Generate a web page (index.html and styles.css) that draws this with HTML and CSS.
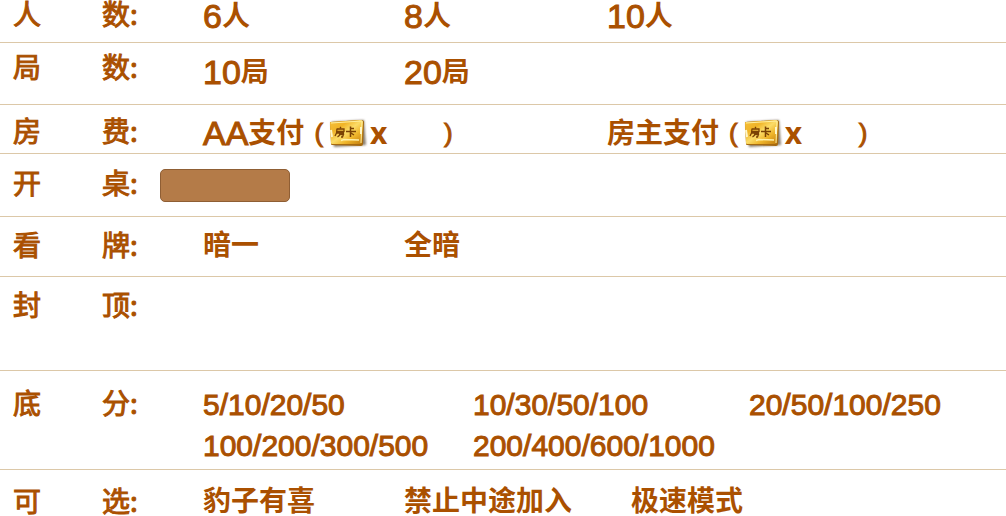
FILE: index.html
```html
<!DOCTYPE html>
<html lang="zh-CN">
<head>
<meta charset="utf-8">
<link rel="stylesheet" href="styles.css">
</head>
<body>
<svg class="defs" aria-hidden="true">
  <defs>
    <linearGradient id="gold" x1="0" y1="0" x2="1" y2="1">
      <stop offset="0" stop-color="#f6c03a"/>
      <stop offset=".3" stop-color="#f0b428"/>
      <stop offset=".5" stop-color="#fbdc68"/>
      <stop offset=".7" stop-color="#efb52a"/>
      <stop offset="1" stop-color="#c07a0c"/>
    </linearGradient>
    <filter id="soft" x="-20%" y="-20%" width="140%" height="140%"><feGaussianBlur stdDeviation="1.2"/></filter>
    <symbol id="card" viewBox="0 0 40 32">
      <path d="M3 5 36 3 38 28 6 30Z" fill="#3c2a10" opacity=".6" filter="url(#soft)"/>
      <path d="M2 6Q2 5 3 5L33 3Q36 3 36 5L35 27Q35 29 33 29L4 28Q3 28 3 27Z" fill="#a66a10"/>
      <path d="M2 6Q2 5 3 5L32 3Q35 3 35 5L34 25Q34 27 32 27L4 27Q3 27 3 26Z" fill="url(#gold)"/>
      <path d="M3 6 34 4 33 26" fill="none" stroke="#fff0a0" stroke-width="1"/>
      <path d="M3 13 4 20M33 10 33 17" stroke="#fff7c8" stroke-width="2"/>
      <path d="M12 10 13 11M9 12H16V14.500H9M9 11.500 8.500 16 7 19M8.500 16H16M12 14.500V16Q12 18.500 9.500 20M12 17.500H15.500L14.500 20H13" fill="none" stroke="#7a4204" stroke-width="1.300"/>
      <path d="M22.500 9.500V14M22.500 11.500H26M18 14.500H28M22.500 14.500V20M23 16 26 18" fill="none" stroke="#7a4204" stroke-width="1.500"/>
      <path d="M13 23.500 16 22.500 31 23" fill="none" stroke="#fff0a8" stroke-width="1.500"/>
    </symbol>
  </defs>
</svg>
<main class="settings">
  <section class="row row-players">
    <h2 class="label"><span>人</span><span>数:</span></h2>
    <ul class="options large"><li>6<b>人</b></li><li>8<b>人</b></li><li>10<b>人</b></li></ul>
  </section>
  <section class="row row-rounds">
    <h2 class="label"><span>局</span><span>数:</span></h2>
    <ul class="options large"><li>10<b>局</b></li><li>20<b>局</b></li></ul>
  </section>
  <section class="row row-fee">
    <h2 class="label"><span>房</span><span>费:</span></h2>
    <ul class="options large pair">
      <li>AA<b>支付</b><span class="cost"><span>(</span><svg class="card"><use href="#card"/></svg><strong>x</strong><span>)</span></span></li>
      <li><b>房主支付</b><span class="cost"><span>(</span><svg class="card"><use href="#card"/></svg><strong>x</strong><span>)</span></span></li>
    </ul>
  </section>
  <section class="row row-table">
    <label class="label" for="table"><span>开</span><span>桌:</span></label>
    <input class="field" id="table" type="text">
  </section>
  <section class="row row-look">
    <h2 class="label"><span>看</span><span>牌:</span></h2>
    <ul class="options"><li><b>暗一</b></li><li><b>全暗</b></li></ul>
  </section>
  <section class="row row-cap">
    <h2 class="label"><span>封</span><span>顶:</span></h2>
  </section>
  <section class="row row-base">
    <h2 class="label"><span>底</span><span>分:</span></h2>
    <ul class="options scores"><li>5/10/20/50</li><li>10/30/50/100</li><li>20/50/100/250</li><li>100/200/300/500</li><li>200/400/600/1000</li></ul>
  </section>
  <section class="row row-extra">
    <h2 class="label"><span>可</span><span>选:</span></h2>
    <ul class="options extras"><li><b>豹子有喜</b></li><li><b>禁止中途加入</b></li><li><b>极速模式</b></li></ul>
  </section>
</main>
</body>
</html>
```
FILE: styles.css
```css
* { box-sizing: border-box; }
body {
  margin: 0;
  background: #fff;
  color: #aa5000;
  font-family: "Liberation Sans", "Noto Sans CJK SC", sans-serif;
  overflow: hidden;
}
.defs { position: absolute; width: 0; height: 0; }
.row {
  display: grid;
  grid-template-columns: 147px 43px 1fr;
  align-items: start;
  padding-left: 13px;
  border-bottom: 1px solid #dcc8a8;
}
.label {
  display: flex;
  gap: 61px;
  margin: 0;
  font-family: "Noto Sans CJK SC", sans-serif;
  font-size: 28px;
  font-weight: 400;
  line-height: 26px;
  -webkit-text-stroke: 1px #aa5000;
  white-space: nowrap;
}
.options {
  grid-column: 3;
  display: grid;
  grid-template-columns: 201fr 203fr 399fr;
  margin: 0;
  padding: 0;
  list-style: none;
  font-size: 30px;
  line-height: 28px;
  font-kerning: none;
  -webkit-text-stroke: 1px #aa5000;
}
.options li { display: flex; align-items: center; white-space: nowrap; }
.options b { font-size: 28px; line-height: 30px; -webkit-text-stroke: 0; }
.large { font-size: 34px; }
.large b { padding-top: 2px; }
.pair { grid-template-columns: 404fr 399fr; }
.cost { display: flex; align-items: center; margin-left: 10px; font-size: 26px; }
.cost strong { width: 74px; font-family: "Noto Sans", sans-serif; font-size: 30px; -webkit-text-stroke: 0; }
.card { width: 40px; height: 32px; margin: -2px 2px -2px 5px; }
.scores { grid-template-columns: 270fr 276fr 257fr; row-gap: 13px; }
.extras { grid-template-columns: 201fr 227fr 375fr; }
.field {
  width: 130px;
  height: 33px;
  padding: 0 8px;
  border: 1px solid #8f5e34;
  border-radius: 5px;
  background: #b47b48;
  color: #fff;
  font: inherit;
}
.row-players { padding-bottom: 10px; }
.row-rounds { padding-top: 10px; padding-bottom: 16px; }
.row-rounds .options { padding-top: 3px; }
.row-fee { padding-top: 12px; padding-bottom: 4px; }
.row-table { padding-top: 15px; padding-bottom: 14px; }
.row-look { padding-top: 14px; padding-bottom: 15px; }
.row-cap { padding-top: 14px; padding-bottom: 53px; }
.row-base { padding-top: 18px; padding-bottom: 9px; }
.row-base .options { padding-top: 2px; }
.row-extra { padding-top: 17px; border-bottom: 0; }
```
